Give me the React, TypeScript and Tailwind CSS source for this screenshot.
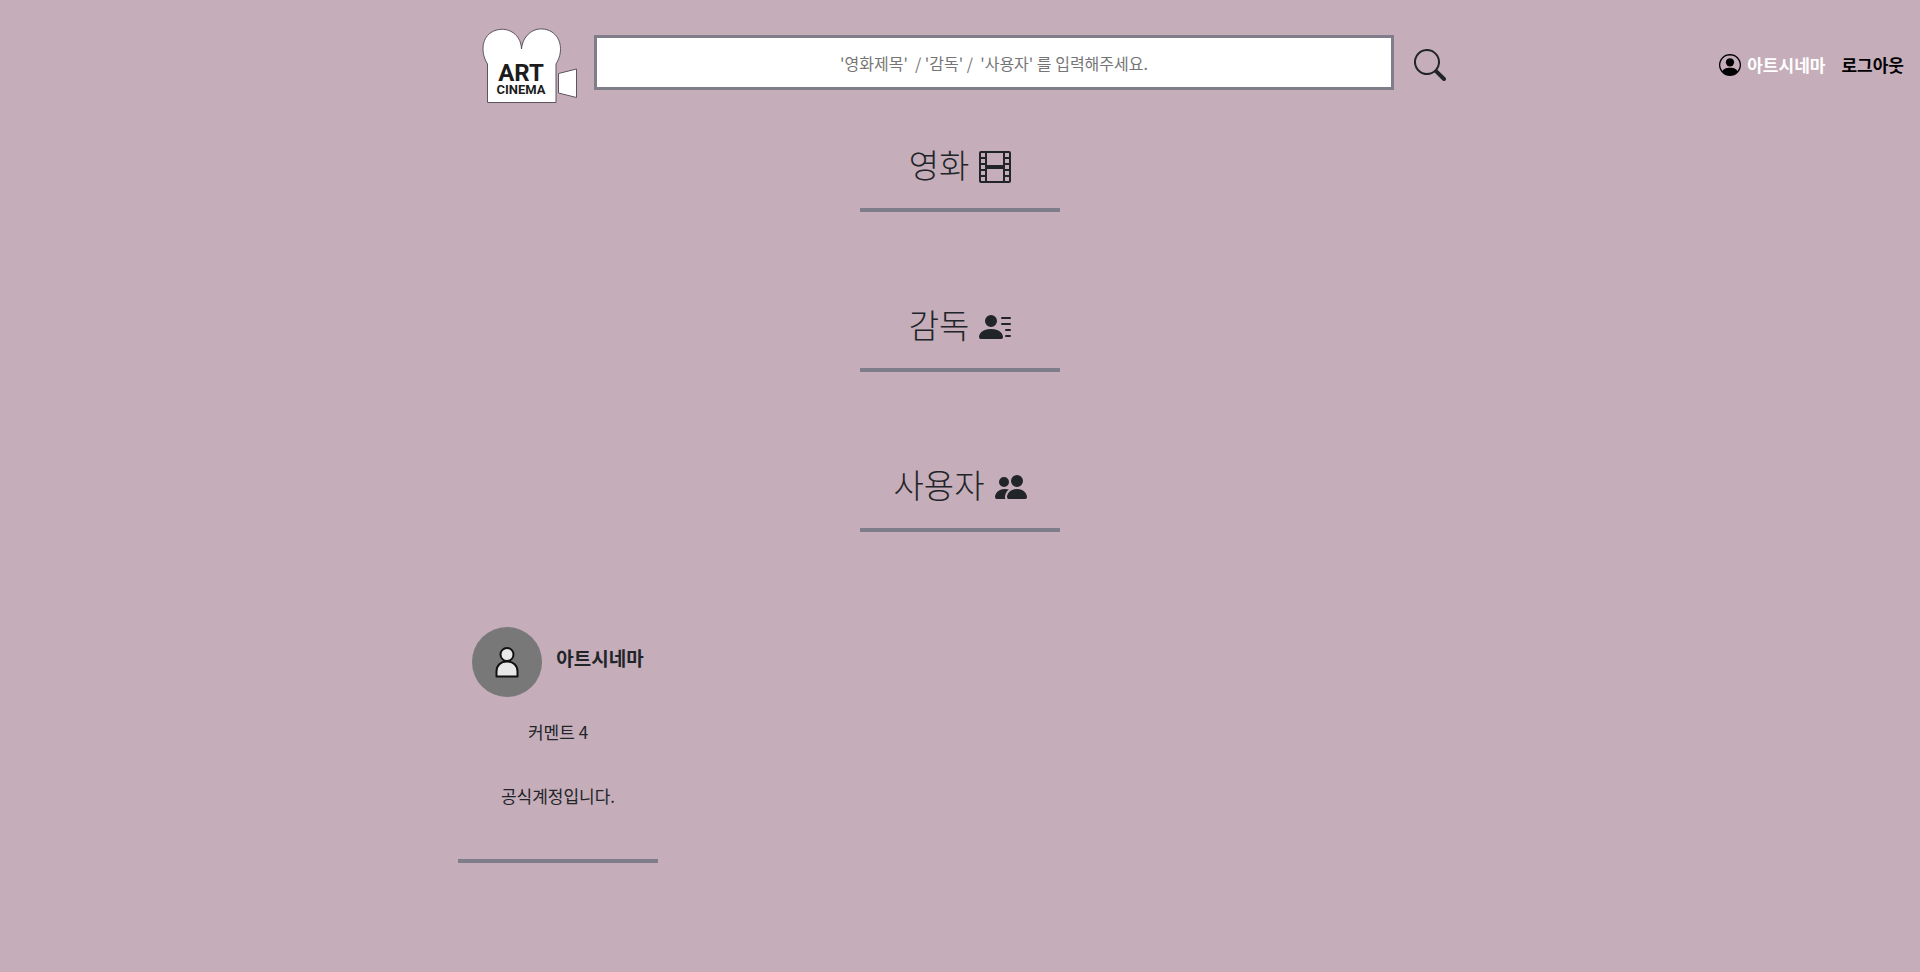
import { useState } from "react";
import type { ReactNode } from "react";
import { BsFilm, BsPeopleFill, BsPersonCircle, BsPersonLinesFill, BsSearch } from "react-icons/bs";

const users = [{ id: 1, name: "아트시네마", comments: 4, intro: "공식계정입니다." }];

function Logo() {
  return (
    <svg viewBox="0 0 96 76" className="h-[76px] w-24" role="img" aria-label="ART CINEMA">
      <path
        d="M5.5 74.5V36C-1 26 -1 11 9 4.500C22 -3.500 39 4 39.500 21C41 4 57 -4 70 4C80 11 81 25 74 36V74.500Z"
        fill="#fff"
        stroke="#5c5560"
      />
      <path d="M76.500 45.500L94.500 41V69.500L76.500 65Z" fill="#fff" stroke="#5c5560" />
      <text textAnchor="middle" className="fill-[#1c1c1c] font-['Roboto',sans-serif] font-bold">
        <tspan x="39" y="53" className="text-[24px]">
          ART
        </tspan>
        <tspan x="39" y="66" className="text-[13px]">
          CINEMA
        </tspan>
      </text>
    </svg>
  );
}

function Avatar() {
  return (
    <div className="flex size-[70px] items-center justify-center rounded-full bg-[#787878]">
      <svg viewBox="0 0 24 32" className="h-8 w-6" fill="#e8e8e8" stroke="#111" strokeWidth="2">
        <path d="M1.500 30.500v-5c0-6 4-10 10.500-10s10.500 4 10.500 10v5z" strokeLinejoin="round" />
        <circle cx="12" cy="8.500" r="6.500" />
      </svg>
    </div>
  );
}

function Section({ title, icon, children }: { title: string; icon: ReactNode; children?: ReactNode }) {
  return (
    <section>
      <div className="mx-auto mb-[75px] w-[200px] border-b-4 border-[#807d8a] pt-6 pb-[25px]">
        <h2 className="flex h-8 items-start justify-center gap-2.5 text-[33px] font-light">
          <span className="leading-[26px]">{title}</span>
          {icon}
        </h2>
      </div>
      {children}
    </section>
  );
}

export default function App() {
  const [keyword, setKeyword] = useState("");

  return (
    <div className="min-h-screen bg-[#c5adb9] font-['Noto_Sans_CJK_KR',sans-serif] text-[17px] leading-6 text-[#212529]">
      <header className="grid grid-cols-[1fr_auto_1fr] items-start pt-7 pb-[23px]">
        <div className="col-start-2 flex items-start gap-4 pl-2">
          <a href="#">
            <Logo />
          </a>
          <form className="flex items-center gap-5 pt-[7px]" onSubmit={(e) => e.preventDefault()}>
            <input
              type="text"
              aria-label="검색"
              value={keyword}
              onChange={(e) => setKeyword(e.target.value)}
              placeholder="'영화제목'  / '감독' /  '사용자' 를 입력해주세요."
              className="h-[55px] w-[800px] border-3 border-[#807d8a] bg-white text-center text-base placeholder:text-[#757575]"
            />
            <button type="submit" aria-label="검색하기" className="pt-1">
              <BsSearch className="size-8" />
            </button>
          </form>
        </div>

        <nav className="flex items-center gap-4 justify-self-end pt-[25px] pr-4 font-bold">
          <a href="#" className="flex items-center gap-1.5 text-white">
            <BsPersonCircle className="size-[22px] text-black" />
            아트시네마
          </a>
          <button type="button" className="text-black">
            로그아웃
          </button>
        </nav>
      </header>

      <main className="mx-auto max-w-[1004px]">
        <Section title="영화" icon={<BsFilm className="size-8" />} />
        <Section title="감독" icon={<BsPersonLinesFill className="size-8" />} />
        <Section title="사용자" icon={<BsPeopleFill className="size-8" />}>
          <div className="grid grid-cols-[repeat(auto-fill,200px)] pt-5">
            {users.map((user) => (
              <article key={user.id} className="border-b-4 border-[#807d8a] pb-[51px] text-center">
                <a href="#" className="flex items-center justify-center gap-3.5">
                  <Avatar />
                  <strong className="pb-2 text-[19px] font-bold">{user.name}</strong>
                </a>
                <p className="mt-[23px]">커멘트 {user.comments}</p>
                <p className="mt-10">{user.intro}</p>
              </article>
            ))}
          </div>
        </Section>
      </main>
    </div>
  );
}
